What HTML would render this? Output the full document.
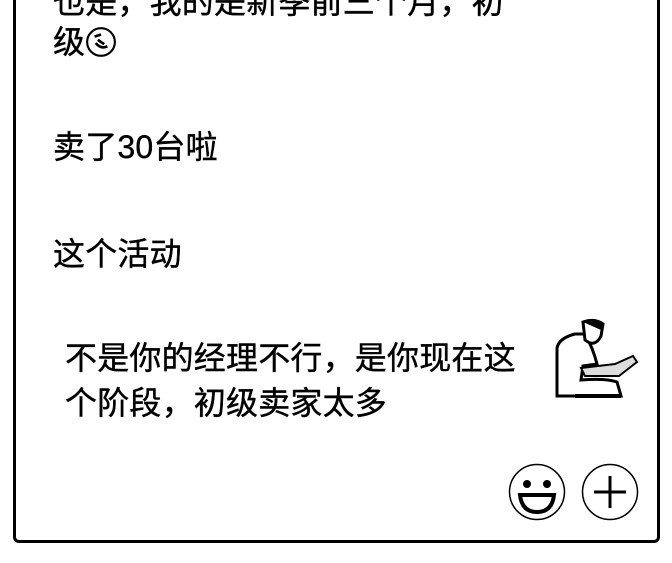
<!DOCTYPE html>
<html><head><meta charset="utf-8"><style>
html,body{margin:0;padding:0;background:#fff;width:672px;height:563px;overflow:hidden;position:relative}
.f{position:absolute;left:13px;top:-10px;width:641px;height:550px;border:3px solid #000;border-top:none;border-radius:0 0 6px 6px}
.t{position:absolute;font-family:"Liberation Sans","Noto Sans CJK SC",sans-serif;font-size:32px;letter-spacing:0.2px;color:#000;white-space:nowrap;line-height:44px;-webkit-text-stroke:0.4px #000}
</style></head><body>
<div class="f"></div>
<div class="t" style="left:53px;top:-20px">也是，我的是新季前三个月，初</div>
<div class="t" style="left:53px;top:20px">级<svg width="32" height="32" viewBox="0 0 30 30" style="vertical-align:-5px"><circle cx="15" cy="15" r="13" fill="#fff" stroke="#000" stroke-width="2"/><path d="M9 10 L15 8 M10 16 Q15 22 21 19 M12 13 L18 17" stroke="#000" stroke-width="2.5" fill="none"/></svg></div>
<div class="t" style="left:53px;top:125px">卖了30台啦</div>
<div class="t" style="left:53px;top:232px">这个活动</div>
<div class="t" style="left:65px;top:336px">不是你的经理不行，是你现在这</div>
<div class="t" style="left:65px;top:381px">个阶段，初级卖家太多</div>
<svg style="position:absolute;left:555px;top:318px" width="85" height="82" viewBox="0 0 85 82">
<path d="M2 78 L2 30 Q4 20 20 16 L30 16 Q38 30 42 46 L28 48 L26 62 Q50 60 62 64 L66 78 Z" fill="#fff" stroke="#000" stroke-width="3"/>
<path d="M28 4 Q40 0 48 6 L46 18 Q40 30 30 22 Z" fill="#fff" stroke="#000" stroke-width="3"/>
<path d="M28 4 L48 4 L46 12 Z" fill="#000"/>
<path d="M26 50 L60 46 L78 38 L82 44 L64 58 L30 58 Z" fill="#ddd" stroke="#000" stroke-width="2"/>
<path d="M20 78 L66 78" stroke="#000" stroke-width="4"/>
</svg>
<svg style="position:absolute;left:506px;top:462px" width="136" height="60" viewBox="0 0 136 60">
<circle cx="31" cy="30" r="27.5" fill="#fff" stroke="#000" stroke-width="1.5"/>
<circle cx="21" cy="22" r="4" fill="#000"/><circle cx="41" cy="22" r="4" fill="#000"/>
<path d="M14 33 L48 33 Q46 50 31 50 Q16 50 14 33 Z" fill="#fff" stroke="#000" stroke-width="4"/>
<circle cx="104" cy="30" r="27.5" fill="#fff" stroke="#000" stroke-width="1.5"/>
<path d="M104 14 V46 M88 30 H120" stroke="#000" stroke-width="3"/>
</svg>
</body></html>
